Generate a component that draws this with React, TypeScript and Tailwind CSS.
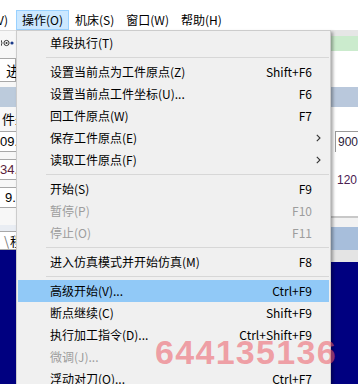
import React from "react";

type Item =
  | { sep: true }
  | { sep?: false; l: string; s?: string; arrow?: boolean; dis?: boolean; hl?: boolean };

const items: Item[] = [
  { l: "单段执行(T)" },
  { sep: true },
  { l: "设置当前点为工件原点(Z)", s: "Shift+F6" },
  { l: "设置当前点工件坐标(U)...", s: "F6" },
  { l: "回工件原点(W)", s: "F7" },
  { l: "保存工件原点(E)", arrow: true },
  { l: "读取工件原点(F)", arrow: true },
  { sep: true },
  { l: "开始(S)", s: "F9" },
  { l: "暂停(P)", s: "F10", dis: true },
  { l: "停止(O)", s: "F11", dis: true },
  { sep: true },
  { l: "进入仿真模式并开始仿真(M)", s: "F8" },
  { sep: true },
  { l: "高级开始(V)...", s: "Ctrl+F9", hl: true },
  { l: "断点继续(C)", s: "Shift+F9" },
  { l: "执行加工指令(D)...", s: "Ctrl+Shift+F9" },
  { l: "微调(J)...", dis: true },
  { l: "浮动对刀(Q)...", s: "Ctrl+F7" },
];

const FONT = { fontFamily: '"Microsoft YaHei", "Noto Sans CJK SC", sans-serif' };

function Chevron() {
  return (
    <svg width="5" height="8" viewBox="0 0 5 8" className="ml-[4px]">
      <path d="M0.8 0.8 L4 4 L0.8 7.2" fill="none" stroke="#333" strokeWidth="1.1" />
    </svg>
  );
}

export default function App() {
  return (
    <div
      className="relative w-[358px] h-[384px] overflow-hidden bg-white text-[12px] text-black"
      style={FONT}
    >
      {/* menu bar */}
      <div className="h-[10px] bg-white" />
      <div className="flex h-[20px] items-center bg-white">
        <div className="ml-[-13px] w-[29px] pl-[2px] pr-[8px] text-right leading-[20px] whitespace-nowrap">(V)</div>
        <div className="h-[20px] border border-[#99d1ff] bg-[#cce8ff] px-[5px] leading-[18px]">操作(O)</div>
        <div className="px-[6px] leading-[20px]">机床(S)</div>
        <div className="px-[6px] leading-[20px]">窗口(W)</div>
        <div className="px-[6px] leading-[20px]">帮助(H)</div>
      </div>

      {/* application body behind the menu */}
      <div className="flex h-[354px]">
        {/* left strip */}
        <div className="flex w-[16px] flex-col overflow-hidden bg-[#f7f7f7]">
          <div className="flex h-[25px] items-center border-t border-[#dcdcdc] pl-[1px]">
            <svg width="14" height="8" viewBox="0 0 14 8">
              <path d="M0 1 Q2 4 0 7" fill="none" stroke="#444" strokeWidth="1" />
              <circle cx="5.5" cy="4" r="2.6" fill="none" stroke="#333" strokeWidth="1" />
              <circle cx="5.5" cy="4" r="1" fill="#333" />
              <circle cx="11" cy="4" r="1.6" fill="#1a3a8a" />
            </svg>
          </div>
          <div className="mt-[3px] flex h-[24px] w-[16px] items-center border border-l-0 border-[#a8a8a8] bg-white pl-[6px] text-[15px] leading-none whitespace-nowrap">
            进
          </div>
          <div className="h-[5px]" />
          <div className="h-[20px] bg-[#bccbdc]" />
          <div className="flex h-[24px] items-center whitespace-nowrap pl-[2px] text-[13px]">件坐</div>
          <div className="flex h-[21px] items-center border-y border-[#a8a8a8] bg-white text-[13px] leading-none whitespace-nowrap" style={{ fontFamily: '"Liberation Sans", sans-serif' }}>
            09.
          </div>
          <div className="h-[7px]" />
          <div className="flex h-[21px] items-center border-y border-[#a8a8a8] bg-white text-[13px] leading-none whitespace-nowrap text-[#5b1e3c]" style={{ fontFamily: '"Liberation Sans", sans-serif' }}>
            34.
          </div>
          <div className="h-[7px]" />
          <div className="flex h-[21px] items-center border-y border-[#a8a8a8] bg-white pl-[5px] text-[13px] leading-none whitespace-nowrap" style={{ fontFamily: '"Liberation Sans", sans-serif' }}>
            9.
          </div>
          <div className="h-[17px]" />
          <div className="flex h-[25px] items-end border-b border-[#a8a8a8] bg-[#e9edf3]">
            <div className="flex h-[18px] w-full items-center border-t border-[#a8a8a8] bg-white pl-[4px] text-[13px] leading-none whitespace-nowrap">
              <span className="mr-[1px] text-[#777]">\</span>程
            </div>
          </div>
          <div className="flex-1 bg-[#000080]" />
        </div>

        {/* middle, hidden under the menu */}
        <div className="w-[315px] bg-[#f0f0f0]" />

        {/* right strip */}
        <div className="flex w-[27px] flex-col overflow-hidden bg-white" style={{ fontFamily: '"Liberation Sans", sans-serif' }}>
          <div className="h-[6px] bg-[#e6e6e6]" />
          <div className="h-[15px] bg-[#cbebcd]" />
          <div className="h-[36px]" />
          <div className="h-[20px] bg-[#b9c8dc]" />
          <div className="h-[24px]" />
          <div className="flex h-[21px] items-center border-t border-l border-[#9a9a9a] ml-[4px] pl-[2px] text-[12px] leading-none whitespace-nowrap text-[#2a1a3a]">
            900
          </div>
          <div className="h-[18px]" />
          <div className="flex h-[20px] items-center pl-[6px] text-[12px] leading-none whitespace-nowrap text-[#4a2050]">120</div>
          <div className="h-[26px]" />
          <div className="h-[2px] bg-[#c8c8c8]" />
          <div className="h-[9px] bg-[#f2f2f2]" />
          <div className="h-[23px] bg-[#a7bedb]" />
          <div className="h-[12px] bg-[#e4e4e4]" />
          <div className="flex-1 bg-[#000080]" />
        </div>
      </div>

      {/* dropdown menu */}
      <div className="absolute left-[16px] top-[30px] w-[315px] border border-[#cccccc] bg-[#f0f0f0] pt-[1px] pb-[4px] shadow-[2px_2px_3px_rgba(0,0,0,0.35)]">
        {items.map((it, i) =>
          it.sep ? (
            <div key={i} className="flex h-[7px] items-center pl-[29px] pr-[1px]">
              <div className="h-[1px] w-full bg-[#d7d7d7]" />
            </div>
          ) : (
            <div
              key={i}
              className={
                "mx-[1px] grid h-[22px] grid-cols-[1fr_auto_17px] items-center pl-[32px] whitespace-nowrap " +
                (it.hl ? "bg-[#91c9f7] " : "") +
                (it.dis ? "text-[#9d9d9d]" : "text-black")
              }
            >
              <span className="leading-none">{it.l}</span>
              <span className="leading-none">{it.s ?? ""}</span>
              <span className="flex items-center">{it.arrow ? <Chevron /> : null}</span>
            </div>
          )
        )}
      </div>

      {/* watermark */}
      <div
        className="pointer-events-none absolute left-[155px] top-[335px] text-[34px] font-bold leading-none tracking-[1.3px] text-[rgba(238,96,108,0.58)]"
        style={{ fontFamily: '"Liberation Sans", Arial, sans-serif' }}
      >
        644135136
      </div>
    </div>
  );
}
